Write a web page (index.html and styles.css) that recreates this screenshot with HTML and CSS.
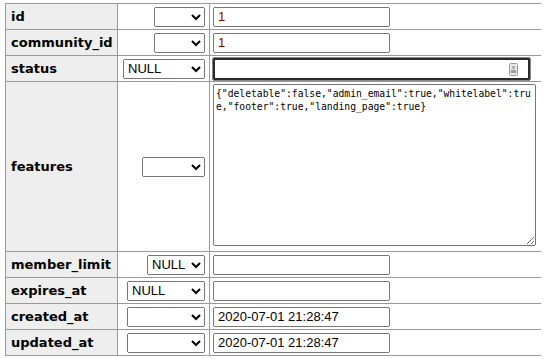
FILE: index.html
```html
<!DOCTYPE html>
<html lang="en">
<head>
<meta charset="UTF-8">
<title>Edit: community_settings</title>
<link rel="stylesheet" href="styles.css">
</head>
<body>
<form class="edit-form">
<table class="layout">
<tbody>
<tr>
  <th>id</th>
  <td class="fn"><select class="fn-id"><option></option></select></td>
  <td><input type="text" class="val num" value="1"></td>
</tr>
<tr>
  <th>community_id</th>
  <td class="fn"><select class="fn-id"><option></option></select></td>
  <td><input type="text" class="val num" value="1"></td>
</tr>
<tr>
  <th>status</th>
  <td class="fn"><select class="fn-wide"><option>NULL</option></select></td>
  <td>
    <div class="wide-wrap">
      <input type="text" class="val wide" value="">
      <span class="pw-icon"><svg width="9" height="13" viewBox="0 0 9 13"><rect x="0.5" y="0.5" width="8" height="12" rx="1" fill="#e8e8e8" stroke="#9a9a9a"/><rect x="3.5" y="3" width="2" height="3" fill="#9a9a9a"/><rect x="2" y="7" width="5" height="3" fill="#9a9a9a"/></svg></span>
    </div>
  </td>
</tr>
<tr class="tall">
  <th>features</th>
  <td class="fn"><select class="fn-mid"><option></option></select></td>
  <td class="area"><textarea class="json" spellcheck="false">{"deletable":false,"admin_email":true,"whitelabel":true,"footer":true,"landing_page":true}</textarea></td>
</tr>
<tr>
  <th>member_limit</th>
  <td class="fn"><select class="fn-null"><option>NULL</option></select></td>
  <td><input type="text" class="val" value=""></td>
</tr>
<tr>
  <th>expires_at</th>
  <td class="fn"><select class="fn-date"><option>NULL</option></select></td>
  <td><input type="text" class="val" value=""></td>
</tr>
<tr>
  <th>created_at</th>
  <td class="fn"><select class="fn-date"><option></option></select></td>
  <td><input type="text" class="val" value="2020-07-01 21:28:47"></td>
</tr>
<tr>
  <th>updated_at</th>
  <td class="fn"><select class="fn-date"><option></option></select></td>
  <td><input type="text" class="val" value="2020-07-01 21:28:47"></td>
</tr>
</tbody>
</table>
</form>
</body>
</html>
```

FILE: styles.css
```css
body {
margin: 3px 5px;
font-family: "DejaVu Sans", Verdana, sans-serif;
font-size: 13px;
color: #000;
background: #fff;
}
.edit-form {
margin: 0;
}
table.layout {
border-collapse: collapse;
border: 1px solid #999;
width: 537px;
table-layout: fixed;
}
table.layout th,
table.layout td {
border: 1px solid #999;
padding: 0 3px 0 3px;
height: 25px;
vertical-align: middle;
}
table.layout th {
width: 103px;
background: #eee;
text-align: left;
font-weight: bold;
padding-left: 5px;
}
table.layout td.fn {
width: 85px;
text-align: right;
padding-right: 4px;
padding-left: 2px;
}
table.layout tr.tall td,
table.layout tr.tall th {
height: 169px;
}
table.layout tr.tall td.area {
vertical-align: top;
padding-top: 2px;
height: 167px;
}
select,
input,
textarea {
font-family: "Liberation Sans", Arial, sans-serif;
font-size: 13px;
box-sizing: border-box;
margin: 0;
vertical-align: middle;
}
select {
height: 20px;
}
.fn-id { width: 51px; }
.fn-wide { width: 82px; }
.fn-mid { width: 63px; }
.fn-null { width: 58px; }
.fn-date { width: 78px; }
input.val {
width: 177px;
height: 20px;
padding: 1px 3px;
}
input.num {
color: #800;
}
.wide-wrap {
position: relative;
width: 317px;
}
input.wide {
width: 317px;
height: 22px;
border: 2px solid #2b2b2b;
border-radius: 1px;
outline: 1px solid #888;
}
.pw-icon {
position: absolute;
right: 12px;
top: 5px;
line-height: 0;
}
textarea.json {
display: block;
width: 323px;
height: 162px;
font-family: "DejaVu Sans Mono", Consolas, monospace;
font-size: 9.7px;
line-height: 13px;
padding: 2px 2px;
resize: both;
}
```
